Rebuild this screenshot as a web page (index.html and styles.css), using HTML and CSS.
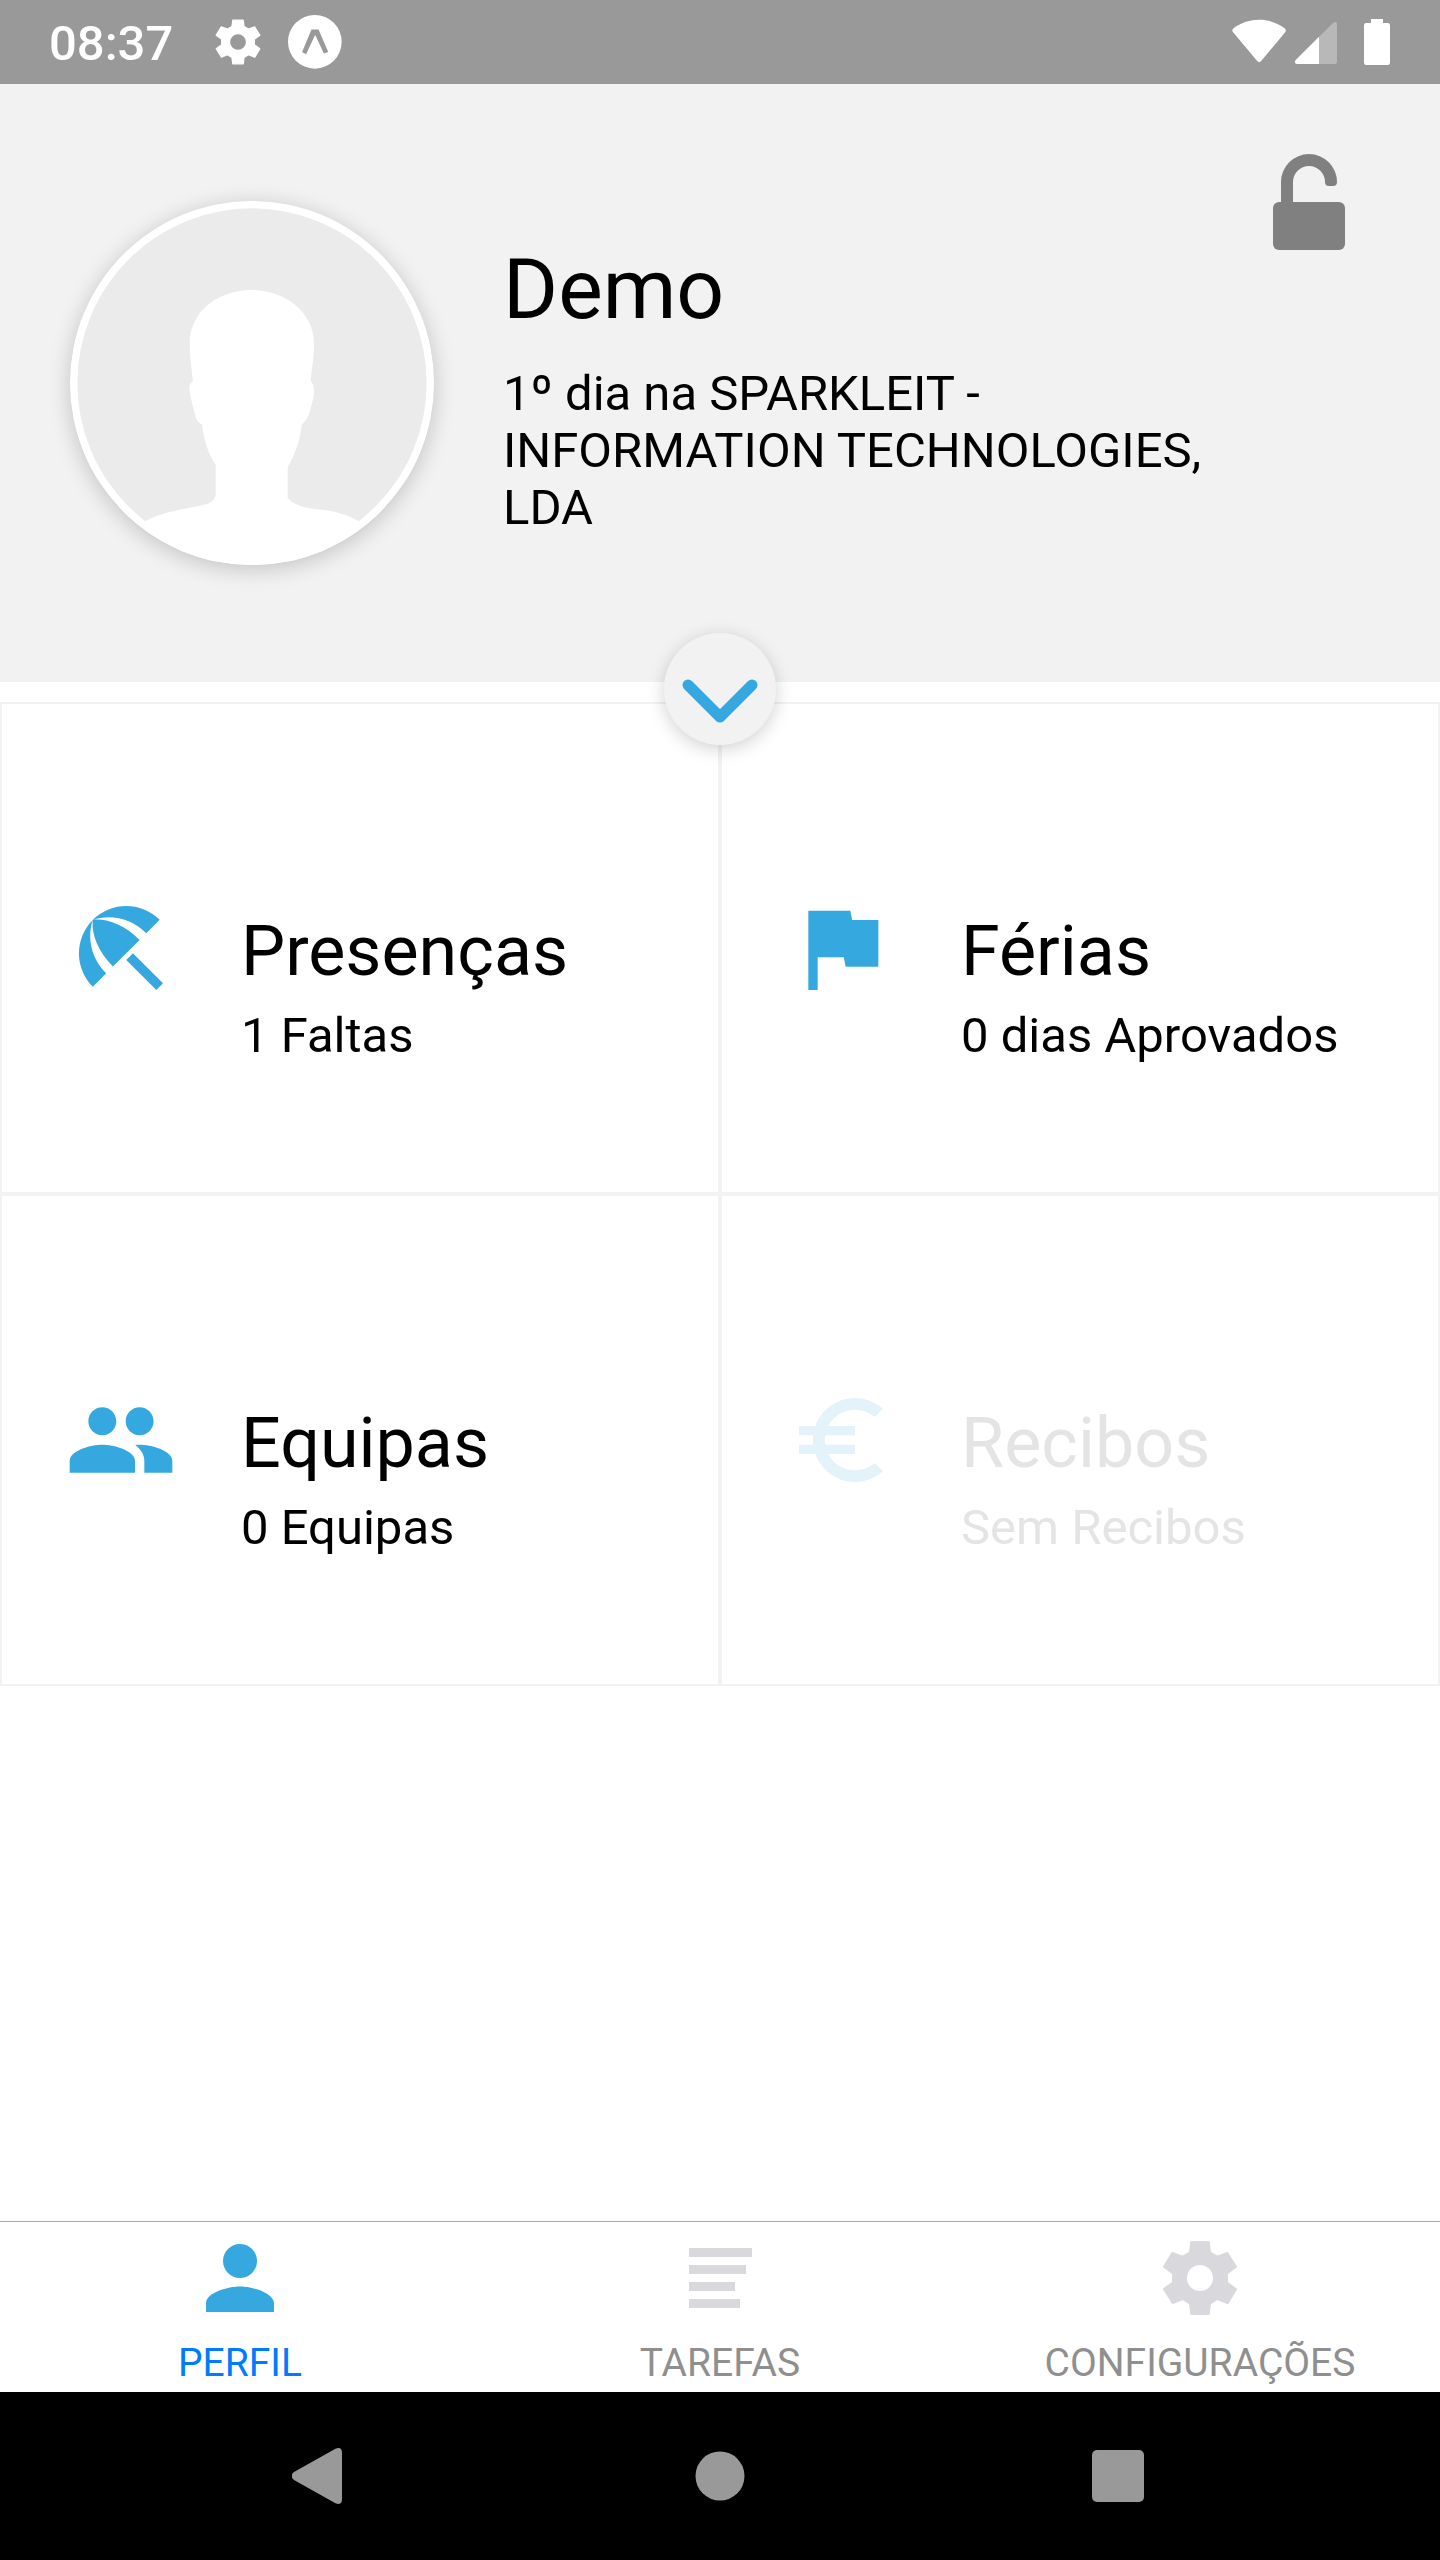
FILE: index.html
```html
<!DOCTYPE html>
<html lang="pt">
<head>
<meta charset="utf-8">
<meta name="viewport" content="width=device-width, initial-scale=1">
<title>Perfil</title>
<link rel="stylesheet" href="styles.css">
</head>
<body>
<svg class="defs" aria-hidden="true">
  <symbol id="gear" viewBox="486 120 228 228">
    <path fill="currentColor" stroke="currentColor" stroke-width="6" stroke-linejoin="round" fill-rule="evenodd" d="M574 126H626L630 157L652 170L682 159L708 200L681 220V248L708 268L683 309L652 297L630 311L626 342H574L570 311L548 297L518 309L492 267L519 248V220L492 200L517 159L548 170L570 157ZM600 192A42 42 0 1 0 600 276A42 42 0 1 0 600 192Z"/>
  </symbol>
</svg>

<div class="status-bar">
  <div class="status-left">
    <time class="clock">08:37</time>
    <svg class="status-gear"><use href="#gear"/></svg>
    <svg class="status-app" viewBox="863 47 161 161"><circle cx="943" cy="127" r="80" fill="#fff"/><path fill="#999" d="M933 90H954L983 157L970 162L945 108H943L917 164L905 157Z"/></svg>
  </div>
  <div class="status-right">
    <svg class="wifi" viewBox="155 57 161 138"><path fill="#fff" d="M160 84C205 51 267 51 311 84Q319 89 314 97L242 183Q236 190 230 183L158 97Q152 90 160 84Z"/></svg>
    <svg class="signal" viewBox="342 57 126 138"><path fill="#b8b8b8" d="M414 110L456 69Q468 61 468 73V185Q468 192 461 192H414Z"/><path fill="#fff" d="M414 110V192H347Q338 189 344 180Z"/></svg>
    <svg class="battery" viewBox="549 57 78 138"><path fill="#fff" d="M570 57H606V69H620Q627 69 627 76V188Q627 195 620 195H556Q549 195 549 188V76Q549 69 556 69H570Z"/></svg>
  </div>
</div>

<header class="profile">
  <svg class="avatar" viewBox="91 63 1092 1092" role="img" aria-label="Fotografia de perfil">
    <circle cx="637" cy="609" r="546" fill="#fff"/>
    <circle cx="637" cy="609" r="524" fill="#ebebeb"/>
    <path fill="#fff" d="M636 330C535 330 450 395 450 490C450 530 456 570 460 604C450 610 448 622 450 634C455 665 462 690 469 715Q474 729 487 733C493 780 505 822 528 854V945Q524 965 500 973C430 990 375 992 317 1024V1160H957V1024C890 985 840 993 790 980Q760 972 744 955V862C762 830 780 790 786 735Q800 722 807 705C815 680 823 650 823 632Q823 612 813 604C817 560 823 530 823 490C823 400 740 330 636 330Z"/>
  </svg>
  <div class="profile-text">
    <h1 class="profile-name">Demo</h1>
    <p class="profile-company">1º dia na SPARKLEIT - INFORMATION TECHNOLOGIES, LDA</p>
  </div>
  <button class="lock" type="button" aria-label="Desbloquear">
    <svg viewBox="279 462 216 288"><rect x="279" y="606" width="216" height="144" rx="18" fill="#808080"/><path fill="#808080" d="M303 610V546A84 84 0 0 1 471 546Q471 558 459 558H447Q435 558 435 546A48 48 0 0 0 339 546V610Z"/></svg>
  </button>
  <button class="expand" type="button" aria-label="Expandir">
    <svg viewBox="0 0 112 112"><path fill="none" stroke="#36a8e0" stroke-width="11" stroke-linecap="round" stroke-linejoin="round" d="M24 52L56 84L88 52"/></svg>
  </button>
</header>

<main class="tiles">
  <button class="tile" type="button">
    <svg class="tile-icon" viewBox="0 0 24 24"><path d="M13.127 14.56l1.43-1.43 6.44 6.443L19.57 21zm4.293-5.73l2.86-2.86c-3.95-3.95-10.35-3.96-14.3-.02 3.93-1.3 8.31-.25 11.44 2.88zM5.95 5.98c-3.94 3.95-3.93 10.35.02 14.3l2.86-2.86C5.7 14.29 4.65 9.91 5.95 5.98zm.02-.02l-.01.01c-.38 3.01 1.17 6.88 4.3 10.02l5.73-5.73c-3.13-3.13-7.01-4.68-10.02-4.3z"/></svg>
    <span class="tile-text"><span class="tile-title">Presenças</span><span class="tile-sub">1 Faltas</span></span>
  </button>
  <button class="tile" type="button">
    <svg class="tile-icon" viewBox="0 0 24 24"><path d="M14.4 6L14 4H5v17h2v-7h5.6l.4 2h7V6z"/></svg>
    <span class="tile-text"><span class="tile-title">Férias</span><span class="tile-sub">0 dias Aprovados</span></span>
  </button>
  <button class="tile" type="button">
    <svg class="tile-icon" viewBox="0 0 24 24"><path d="M16 11c1.66 0 2.99-1.34 2.99-3S17.66 5 16 5c-1.66 0-3 1.34-3 3s1.34 3 3 3zm-8 0c1.66 0 2.99-1.34 2.99-3S9.66 5 8 5C6.34 5 5 6.34 5 8s1.34 3 3 3zm0 2c-2.33 0-7 1.17-7 3.5V19h14v-2.5c0-2.33-4.67-3.5-7-3.5zm8 0c-.29 0-.62.02-.97.05 1.16.84 1.97 1.97 1.97 3.45V19h6v-2.5c0-2.33-4.67-3.5-7-3.5z"/></svg>
    <span class="tile-text"><span class="tile-title">Equipas</span><span class="tile-sub">0 Equipas</span></span>
  </button>
  <button class="tile" type="button" disabled>
    <svg class="tile-icon" viewBox="0 0 24 24"><path d="M15 18.5c-2.51 0-4.68-1.42-5.76-3.5H15v-2H8.58c-.05-.33-.08-.66-.08-1s.03-.67.08-1H15V9H9.24C10.32 6.92 12.5 5.5 15 5.5c1.61 0 3.09.59 4.23 1.57L21 5.3C19.41 3.87 17.3 3 15 3c-3.92 0-7.24 2.51-8.48 6H3v2h3.06c-.04.33-.06.66-.06 1s.02.67.06 1H3v2h3.52c1.24 3.49 4.56 6 8.48 6 2.31 0 4.41-.87 6-2.3l-1.78-1.77c-1.13.98-2.6 1.57-4.22 1.57z"/></svg>
    <span class="tile-text"><span class="tile-title">Recibos</span><span class="tile-sub">Sem Recibos</span></span>
  </button>
</main>

<nav class="tabs">
  <a class="tab tab-active" href="#perfil" aria-current="page">
    <span class="tab-icon"><svg class="tab-person" viewBox="0 0 24 24"><path fill="currentColor" d="M12 12c2.21 0 4-1.79 4-4s-1.79-4-4-4-4 1.79-4 4 1.79 4 4 4zm0 2c-2.67 0-8 1.34-8 4v2h16v-2c0-2.66-5.33-4-8-4z"/></svg></span>
    <span>PERFIL</span>
  </a>
  <a class="tab" href="#tarefas">
    <span class="tab-icon"><svg class="tab-list" viewBox="0 0 63 60"><path fill="currentColor" d="M0 0H63V9H0ZM0 17H57V26H0ZM0 34H46V43H0ZM0 51H51V60H0Z"/></svg></span>
    <span>TAREFAS</span>
  </a>
  <a class="tab" href="#configuracoes">
    <span class="tab-icon"><svg class="tab-gear"><use href="#gear"/></svg></span>
    <span>CONFIGURAÇÕES</span>
  </a>
</nav>

<div class="system-nav">
  <button type="button" aria-label="Voltar"><svg viewBox="0 0 56 56"><path fill="#999" d="M2 24L43 1Q50 -2 50 5V51Q50 58 43 55L2 32Q-3 28 2 24Z"/></svg></button>
  <button type="button" aria-label="Início"><svg viewBox="0 0 56 56"><circle cx="28" cy="28" r="24.500" fill="#999"/></svg></button>
  <button type="button" aria-label="Recentes"><svg viewBox="0 0 56 56"><rect x="0" y="2" width="52" height="52" rx="5" fill="#999"/></svg></button>
</div>
</body>
</html>
```
FILE: styles.css
```css
* {
  box-sizing: border-box;
}

body {
  margin: 0;
  min-height: 100vh;
  display: flex;
  flex-direction: column;
  background: #fff;
  color: #000;
  font-family: Roboto, "Liberation Sans", sans-serif;
  font-size: 49px;
  line-height: 57px;
}

button {
  margin: 0;
  padding: 0;
  border: 0;
  background: none;
  color: inherit;
  font: inherit;
  text-align: left;
}

svg {
  display: block;
  flex: none;
}

.defs {
  position: absolute;
  width: 0;
  height: 0;
}

/* Status bar */
.status-bar {
  display: flex;
  justify-content: space-between;
  align-items: center;
  height: 84px;
  padding: 0 50px 0 49px;
  background: #999;
  color: #fff;
}

.status-left,
.status-right {
  display: flex;
  align-items: center;
}

.clock {
  margin-right: 42px;
  padding-top: 2px;
  font-weight: 500;
}

.status-gear {
  width: 46px;
  height: 46px;
  margin-right: 27px;
}

.status-app {
  width: 54px;
  height: 54px;
}

.wifi {
  width: 54px;
  height: 46px;
  margin-right: 9px;
}

.signal {
  width: 42px;
  height: 46px;
  margin-right: 27px;
}

.battery {
  width: 26px;
  height: 46px;
}

/* Profile header */
.profile {
  position: relative;
  display: flex;
  align-items: flex-start;
  padding: 70px 95px 117px 70px;
  background: #f2f2f2;
}

.avatar {
  width: 364px;
  height: 364px;
  margin-top: 47px;
  border-radius: 50%;
  overflow: hidden;
  box-shadow: 0 4px 22px rgba(0, 0, 0, 0.2);
}

.profile-text {
  flex: 1;
  min-width: 0;
  margin: 87px 0 0 69px;
}

.profile-name {
  margin: 0 0 26px;
  font-size: 84px;
  line-height: 98px;
  font-weight: 400;
}

.profile-company {
  margin: 0;
}

.lock svg {
  width: 72px;
  height: 96px;
}

.expand {
  position: absolute;
  left: 50%;
  bottom: -63px;
  width: 112px;
  height: 112px;
  margin-left: -56px;
  border-radius: 50%;
  background: #f2f2f2;
  box-shadow: 0 4px 18px rgba(0, 0, 0, 0.18);
}

/* Tiles */
.tiles {
  flex: 1;
  display: grid;
  grid-template-columns: 1fr 1fr;
  grid-auto-rows: 492px;
  padding: 20px 0;
}

.tile {
  display: flex;
  align-items: flex-start;
  gap: 64px;
  padding: 188px 0 0 63px;
  border: 2px solid #f2f2f2;
}

.tile-icon {
  width: 112px;
  height: 112px;
  fill: #36a8e0;
}

.tile-text {
  display: flex;
  flex-direction: column;
  gap: 15px;
  padding-top: 18px;
}

.tile-title {
  font-size: 70px;
  line-height: 82px;
}

.tile:disabled {
  color: #e4e4e4;
}

.tile:disabled .tile-icon {
  fill: #e4f2fa;
}

/* Tab bar */
.tabs {
  display: flex;
  border-top: 1px solid #a9a9a9;
}

.tab {
  flex: 1;
  display: flex;
  flex-direction: column;
  align-items: center;
  gap: 11px;
  padding: 5px 0 6px;
  color: #8f8f8f;
  font-size: 39px;
  line-height: 46px;
  text-decoration: none;
}

.tab-active {
  color: #007aff;
}

.tab-icon {
  display: flex;
  align-items: center;
  justify-content: center;
  height: 102px;
  color: #d8d8dd;
}

.tab-active .tab-icon {
  color: #36a8e0;
}

.tab-person {
  width: 102px;
  height: 102px;
}

.tab-list {
  width: 63px;
  height: 60px;
}

.tab-gear {
  width: 76px;
  height: 76px;
}

/* System navigation */
.system-nav {
  display: flex;
  align-items: center;
  height: 168px;
  padding: 0 120px;
  background: #000;
}

.system-nav button {
  flex: 1;
  display: flex;
  justify-content: center;
}

.system-nav svg {
  width: 56px;
  height: 56px;
}
```
